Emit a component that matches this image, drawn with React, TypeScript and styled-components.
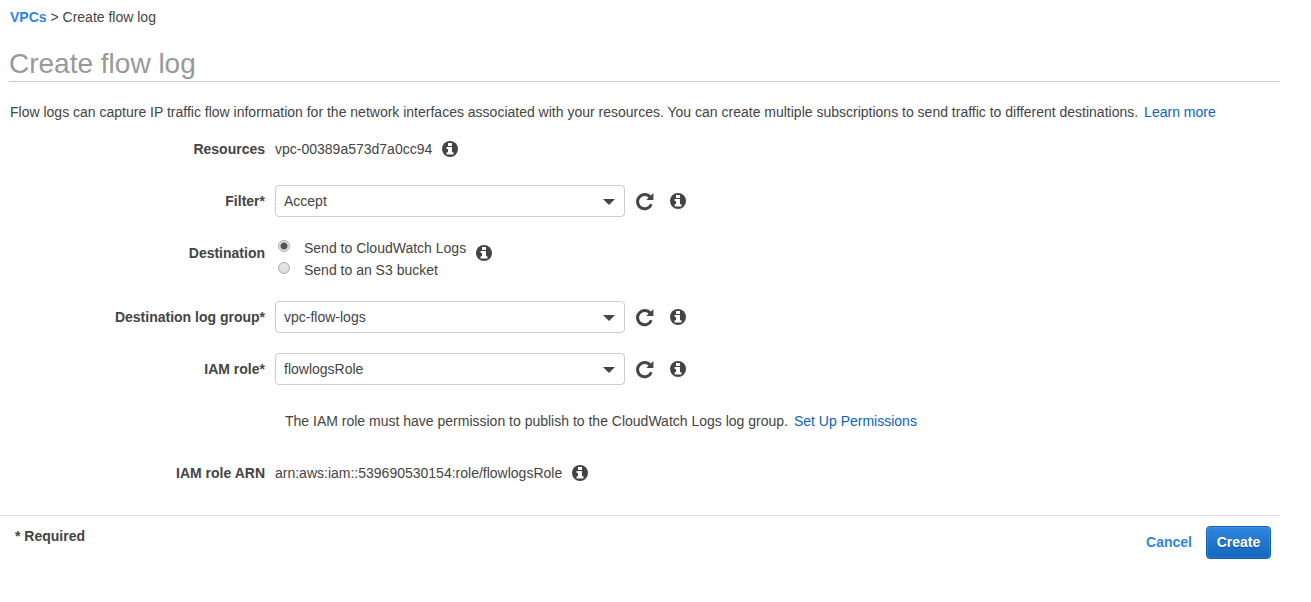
import React, { useState } from "react";
import styled, { createGlobalStyle } from "styled-components";

const GlobalStyle = createGlobalStyle`
  *, *::before, *::after { box-sizing: border-box; }
  body {
    margin: 0;
    background: #fff;
    color: #444;
    font: 14px/20px "Liberation Sans", Arial, sans-serif;
  }
`;

const Page = styled.main`
  padding: 7px 31px 0 0;
`;

const Breadcrumb = styled.nav`
  padding-left: 10px;
`;

const TextLink = styled.a<{ $strong?: boolean }>`
  color: ${(p) => (p.$strong ? "#2e86de" : "#0c63bd")};
  font-weight: ${(p) => (p.$strong ? 700 : 400)};
  text-decoration: none;
  &:hover { text-decoration: underline; }
`;

const Title = styled.h1`
  margin: 20px 0 0 9px;
  border-bottom: 1px solid #ccc;
  color: #999;
  font-size: 28px;
  line-height: 34px;
  font-weight: 400;
`;

const Intro = styled.p`
  margin: 20px 0 11px 10px;
`;

const Spaced = styled.span`
  margin-right: 6px;
`;

const Form = styled.form`
  display: flex;
  flex-direction: column;
`;

const Fields = styled.div`
  display: flex;
  flex-direction: column;
  gap: 20px;
  padding-bottom: 26px;
`;

const Row = styled.div`
  display: grid;
  grid-template-columns: 265px 1fr;
  column-gap: 10px;
  line-height: 32px;
`;

const Label = styled.label`
  font-weight: 700;
  text-align: right;
`;

const Caption = styled.span`
  font-weight: 700;
  text-align: right;
`;

const Value = styled.div`
  display: flex;
  align-items: flex-start;
  gap: 10px;
`;

const Note = styled.p`
  grid-column: 2;
  margin: 0;
  padding-left: 10px;
`;

const SelectBox = styled.div`
  position: relative;
  width: 350px;
  height: 32px;
`;

const Select = styled.select`
  appearance: none;
  display: block;
  width: 100%;
  height: 100%;
  padding: 0 32px 0 8px;
  border: 1px solid #ccc;
  border-radius: 4px;
  background: #fff;
  color: #444;
  font: inherit;
  line-height: 20px;
`;

const Caret = styled.svg`
  position: absolute;
  top: 14px;
  right: 10px;
  width: 12px;
  height: 6px;
  fill: #444;
  pointer-events: none;
`;

const IconButton = styled.button`
  display: flex;
  align-items: center;
  height: 32px;
  padding: 0;
  border: 0;
  background: none;
  color: #444;
  cursor: pointer;
`;

const Tools = styled.div`
  display: flex;
  gap: 15px;
`;

const Glyph = styled.svg<{ $size: number }>`
  display: block;
  width: ${(p) => p.$size}px;
  height: ${(p) => p.$size}px;
  fill: currentColor;
`;

const Options = styled.div`
  display: flex;
  flex-direction: column;
`;

const Option = styled.label`
  display: flex;
  align-items: flex-start;
  gap: 14px;
  line-height: 22px;
`;

const Radio = styled.input`
  appearance: none;
  width: 12px;
  height: 12px;
  margin: 3px 0 0 3px;
  border: 1px solid #aaa;
  border-radius: 50%;
  background: linear-gradient(#e8e8e8, #dcdcdc);
  &:checked {
    background: radial-gradient(circle, #555 0 3px, #e4e4e4 4px);
  }
`;

const Footer = styled.footer`
  display: flex;
  justify-content: space-between;
  padding: 10px 9px 0 15px;
  border-top: 1px solid #ddd;
`;

const Required = styled.strong`
  line-height: 20px;
`;

const Actions = styled.div`
  display: flex;
  align-items: flex-start;
  gap: 14px;
`;

const CancelButton = styled.button`
  padding: 0;
  border: 0;
  background: none;
  color: #2e86de;
  font: inherit;
  line-height: 32px;
  font-weight: 700;
  cursor: pointer;
`;

const CreateButton = styled.button`
  width: 65px;
  height: 33px;
  padding: 0 0 2px;
  border: 1px solid #1160b6;
  border-radius: 4px;
  background: linear-gradient(#2f85dd, #1467bf);
  box-shadow: inset 0 0 1px 1px rgba(255, 255, 255, 0.12);
  color: #fff;
  font: inherit;
  font-weight: 700;
  text-shadow: 0 1px 1px rgba(0, 0, 0, 0.3);
  cursor: pointer;
`;

const Info = ({ about }: { about: string }) => (
  <IconButton type="button" aria-label={`About ${about}`}>
    <Glyph $size={16} viewBox="0 0 16 16" aria-hidden="true">
      <circle cx="8" cy="8" r="8" />
      <path fill="#fff" d="M6 2h4v3H6zM4.6 6H10v5.2h1.5V13.4H4.6V11.2H6V8H4.6z" />
    </Glyph>
  </IconButton>
);

const Refresh = ({ about }: { about: string }) => (
  <IconButton type="button" aria-label={`Refresh ${about}`}>
    <Glyph $size={20} viewBox="0 0 20 20" aria-hidden="true">
      <path d="M15.2 6.2A7.1 7.1 0 1 0 16.3 13.2" fill="none" stroke="currentColor" strokeWidth="3" />
      <path d="M18.4 2V9.1H11.3z" />
    </Glyph>
  </IconButton>
);

interface SelectFieldProps {
  id: string;
  label: string;
  options: string[];
}

const SelectField = ({ id, label, options }: SelectFieldProps) => (
  <Row>
    <Label htmlFor={id}>{label}*</Label>
    <Value>
      <SelectBox>
        <Select id={id} required defaultValue={options[0]}>
          {options.map((option) => (
            <option key={option}>{option}</option>
          ))}
        </Select>
        <Caret viewBox="0 0 12 6" aria-hidden="true">
          <path d="M0 0h12L6 6z" />
        </Caret>
      </SelectBox>
      <Tools>
        <Refresh about={label} />
        <Info about={label} />
      </Tools>
    </Value>
  </Row>
);

const destinations = ["Send to CloudWatch Logs", "Send to an S3 bucket"];

export default function App() {
  const [destination, setDestination] = useState(destinations[0]);

  return (
    <>
      <GlobalStyle />
      <Page>
        <Breadcrumb>
          <TextLink href="#vpcs" $strong>VPCs</TextLink> &gt; Create flow log
        </Breadcrumb>
        <Title>Create flow log</Title>
        <Intro>
          <Spaced>
            Flow logs can capture IP traffic flow information for the network interfaces associated
            with your resources. You can create multiple subscriptions to send traffic to different
            destinations.
          </Spaced>
          <TextLink href="#learn-more">Learn more</TextLink>
        </Intro>
        <Form onSubmit={(event) => event.preventDefault()}>
          <Fields>
            <Row>
              <Caption>Resources</Caption>
              <Value>
                <span>vpc-00389a573d7a0cc94</span>
                <Info about="Resources" />
              </Value>
            </Row>
            <SelectField id="filter" label="Filter" options={["Accept", "Reject", "All"]} />
            <Row role="radiogroup" aria-labelledby="destination">
              <Caption id="destination">Destination</Caption>
              <Value>
                <Options>
                  {destinations.map((name) => (
                    <Option key={name}>
                      <Radio
                        type="radio"
                        name="destination"
                        checked={destination === name}
                        onChange={() => setDestination(name)}
                      />
                      {name}
                    </Option>
                  ))}
                </Options>
                <Info about="Destination" />
              </Value>
            </Row>
            <SelectField id="log-group" label="Destination log group" options={["vpc-flow-logs"]} />
            <SelectField id="iam-role" label="IAM role" options={["flowlogsRole"]} />
            <Row>
              <Note>
                <Spaced>
                  The IAM role must have permission to publish to the CloudWatch Logs log group.
                </Spaced>
                <TextLink href="#permissions">Set Up Permissions</TextLink>
              </Note>
            </Row>
            <Row>
              <Caption>IAM role ARN</Caption>
              <Value>
                <span>arn:aws:iam::539690530154:role/flowlogsRole</span>
                <Info about="IAM role ARN" />
              </Value>
            </Row>
          </Fields>
          <Footer>
            <Required>* Required</Required>
            <Actions>
              <CancelButton type="button">Cancel</CancelButton>
              <CreateButton type="submit">Create</CreateButton>
            </Actions>
          </Footer>
        </Form>
      </Page>
    </>
  );
}
